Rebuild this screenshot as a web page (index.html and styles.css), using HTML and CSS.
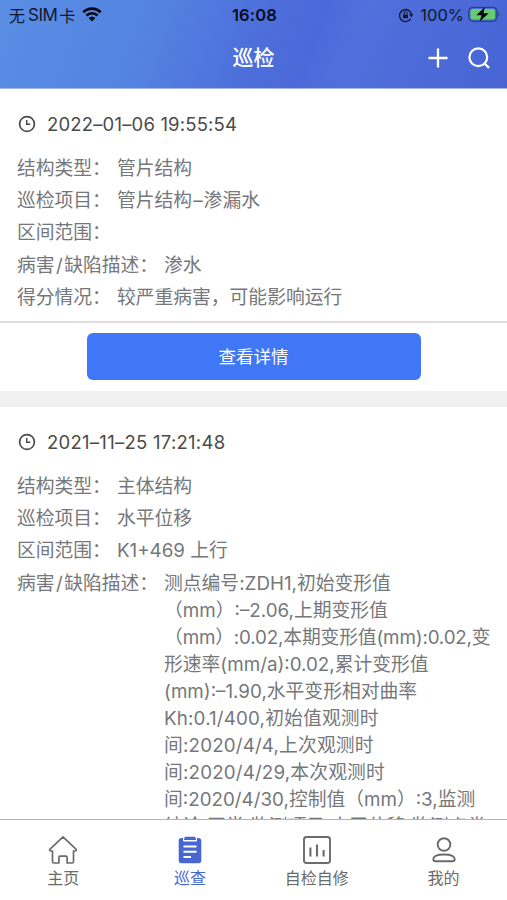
FILE: index.html
```html
<!DOCTYPE html>
<html lang="zh-CN">
<head>
<meta charset="utf-8">
<title>巡检</title>
<link rel="stylesheet" href="styles.css">
</head>
<body>
<div class="app">
  <header class="header">
    <div class="status">
      <div class="status-left"><span>无</span><span class="sim">SIM</span><span>卡</span>
        <svg class="wifi" viewBox="0 0 20 15" width="20" height="15"><path d="M1.3 5.2a12.6 12.6 0 0 1 17.4 0M4.4 8.5a8.1 8.1 0 0 1 11.2 0" fill="none" stroke="currentColor" stroke-width="2.7"/><path d="M6.6 11a5 5 0 0 1 6.8 0L10 14.4z" fill="currentColor"/></svg>
      </div>
      <div class="time">16:08</div>
      <div class="status-right">
        <svg viewBox="0 0 16 16" width="16" height="16"><path d="M12.6 11.8A6 6 0 1 1 13.5 8" fill="none" stroke="currentColor" stroke-width="1.4"/><path d="M11.2 7.2h4.2l-2.1 3zM5 7.4h5v3.8H5z" fill="currentColor"/><path d="M6 7.5V6a1.5 1.5 0 0 1 3 0v1.500" fill="none" stroke="currentColor"/></svg>
        <span class="percent">100%</span>
        <svg class="battery" viewBox="0 0 32 17" width="32" height="17"><rect x=".8" y="1.300" width="28" height="14" rx="4" fill="none" stroke="#28418b" stroke-width="1.2"/><rect x="2.600" y="3.100" width="24.400" height="10.400" rx="2.500" fill="#65cd6e"/><path d="M30.300 6v4.600c1.500-.7 1.500-3.900 0-4.600z" fill="#28418b"/><path d="M16.800 1 8.300 9.200h5.200L11.700 15.600 20.800 7.300h-5.300z" fill="#050914"/></svg>
      </div>
    </div>
    <div class="nav">
      <h1 class="title">巡检</h1>
      <div class="actions">
        <svg viewBox="0 0 22 22" width="22" height="22"><path d="M11 1.500v19M1.500 11h19" stroke="currentColor" stroke-width="2.300" fill="none"/></svg>
        <svg viewBox="0 0 24 24" width="24" height="24"><circle cx="11.300" cy="11.300" r="8.900" fill="none" stroke="currentColor" stroke-width="2.200"/><path d="m17.300 17.300 4.700 4.600" stroke="currentColor" stroke-width="2.300"/></svg>
      </div>
    </div>
  </header>

  <main class="list">
    <article class="card">
      <div class="stamp"><svg viewBox="0 0 18 18" width="18" height="18"><circle cx="9" cy="9" r="7.400" fill="none" stroke="currentColor" stroke-width="1.700"/><path d="M8.700 4.900v4.300h3.600" fill="none" stroke="currentColor" stroke-width="1.500"/></svg><span class="date">2022–01–06 19:55:54</span></div>
      <dl class="rows">
        <div class="row"><dt>结构类型：</dt><dd>管片结构</dd></div>
        <div class="row"><dt>巡检项目：</dt><dd>管片结构<span class="dash">–</span>渗漏水</dd></div>
        <div class="row"><dt>区间范围：</dt><dd></dd></div>
        <div class="row"><dt>病害<span class="slash">/</span>缺陷描述：</dt><dd>渗水</dd></div>
        <div class="row"><dt>得分情况：</dt><dd>较严重病害，可能影响运行</dd></div>
      </dl>
      <div class="card-foot"><button class="detail">查看详情</button></div>
    </article>

    <article class="card">
      <div class="stamp"><svg viewBox="0 0 18 18" width="18" height="18"><circle cx="9" cy="9" r="7.400" fill="none" stroke="currentColor" stroke-width="1.700"/><path d="M8.700 4.900v4.300h3.600" fill="none" stroke="currentColor" stroke-width="1.500"/></svg><span class="date wide">2021–11–25 17:21:48</span></div>
      <dl class="rows">
        <div class="row"><dt>结构类型：</dt><dd>主体结构</dd></div>
        <div class="row"><dt>巡检项目：</dt><dd>水平位移</dd></div>
        <div class="row"><dt>区间范围：</dt><dd>K1+469 上行</dd></div>
        <div class="row"><dt>病害<span class="slash">/</span>缺陷描述：</dt><dd>测点编号:ZDH1,初始变形值<br>（mm）:–2.06,上期变形值<br><span class="tight">（mm）:0.02,本期变形值(mm):0.02,变</span><br>形速率(mm/a):0.02,累计变形值<br>(mm):–1.90,水平变形相对曲率<br><span class="loose">Kh:0.1/400,初始值观测时<br>间:2020/4/4,上次观测时<br>间:2020/4/29,本次观测时<br></span>间:2020/4/30,控制值（mm）:3,监测<br>结论:正常,监测项目:水平位移,监测点类</dd></div>
      </dl>
    </article>
  </main>

  <nav class="tabs">
    <a class="tab"><svg viewBox="0 0 30 30" width="30" height="30"><path d="M15 1.800 1.800 14.400c-.6 1 .1 1.600 1 1.600h1.700v10.600c0 .9.500 1.400 1.300 1.400h5.100v-5.600c0-.8.400-1.200 1.100-1.200h6c.7 0 1.100.4 1.100 1.200V28h5.100c.8 0 1.300-.5 1.300-1.400V16h1.700c.9 0 1.600-.6 1-1.600z" fill="none" stroke="currentColor" stroke-width="1.700" stroke-linejoin="round"/></svg><span>主页</span></a>
    <a class="tab active"><svg viewBox="0 0 30 30" width="30" height="30"><path d="M6.500 3H8v2.300c0 .8.500 1.200 1.200 1.200h11.600c.7 0 1.200-.4 1.200-1.200V3h1.500c1.700 0 2.800 1 2.800 2.600v20c0 1.700-1 2.700-2.700 2.700H6.400c-1.700 0-2.700-1-2.700-2.700v-20C3.700 4 4.700 3 6.500 3z" fill="currentColor"/><path d="M9.800 1.800h10.400l.9 3.300H8.900z" fill="currentColor"/><path d="M8.500 11.500h13M8.500 16.800h13M8.500 22h7.500" stroke="#fff" stroke-width="1.900"/></svg><span>巡查</span></a>
    <a class="tab"><svg viewBox="0 0 30 30" width="30" height="30"><rect x="2" y="2" width="26" height="26" rx="2.500" fill="none" stroke="currentColor" stroke-width="1.900"/><path d="M8.400 12.500v9M15 9.500v12M21.600 15v6.500" stroke="currentColor" stroke-width="2.100"/></svg><span>自检自修</span></a>
    <a class="tab"><svg viewBox="0 0 30 30" width="30" height="30"><circle cx="15" cy="9.500" r="6.300" fill="none" stroke="currentColor" stroke-width="1.900"/><path d="M4.300 24.200c0-3.100 4.300-4.700 10.700-4.700s10.700 1.600 10.700 4.700c0 1.500-.9 2-2.300 2H6.600c-1.400 0-2.300-.5-2.300-2z" fill="none" stroke="currentColor" stroke-width="1.900"/></svg><span>我的</span></a>
  </nav>
</div>
</body>
</html>
```
FILE: styles.css
```css
* { box-sizing: border-box; }
body {
  margin: 0;
  font-family: Inter, "Noto Sans CJK SC", sans-serif;
  text-spacing-trim: space-all;
  color: #75777b;
}
svg { display: block; flex: none; }
.app {
  display: flex;
  flex-direction: column;
  width: 507px;
  height: 900px;
  overflow: hidden;
  background: #fff;
}
.header {
  flex: none;
  height: 89px;
  border-bottom: 1px solid #a6b6ea;
  background:
    linear-gradient(120deg, transparent 67%, rgba(76, 104, 216, .1) 67.5%, rgba(70, 98, 211, .4) 100%),
    linear-gradient(110deg, #598ee4 0%, #5484e2 28%, #4d6fdb 50%, #4c69d9 61%, #5072dd 69%, #4a66d5 100%);
}
.status {
  display: grid;
  grid-template-columns: 1fr auto 1fr;
  align-items: center;
  height: 29px;
  padding: 0 7px 0 9px;
  color: #10182d;
}
.status-left, .status-right { display: flex; align-items: center; }
.status-left { font-size: 16px; }
.sim { margin: 0 2px 0 3px; font-size: 17px; letter-spacing: -.5px; }
.wifi { margin-left: 7px; color: #050914; }
.time { font-size: 16.5px; font-weight: 600; letter-spacing: .2px; color: #070d20; }
.status-right { justify-content: flex-end; }
.percent { margin: 0 4px 0 6px; font-size: 16.5px; }
.nav {
  display: grid;
  grid-template-columns: 1fr auto 1fr;
  align-items: center;
  height: 57px;
  padding: 0 16px;
  color: #fff;
}
.title { grid-column: 2; margin: 0; font-size: 21px; line-height: 30px; font-weight: 500; }
.actions { display: flex; align-items: center; justify-content: flex-end; gap: 18px; }
.list { flex: 1; min-height: 0; overflow: hidden; background: #f0f0f0; }
.card { margin-bottom: 16px; background: #fff; }
.stamp {
  display: flex;
  align-items: center;
  gap: 11px;
  height: 65.6px;
  padding: 4px 18px 0;
  color: #4b4b4b;
}
.date { font-size: 18.5px; letter-spacing: .17px; }
.wide { letter-spacing: .27px; }
.rows {
  display: flex;
  flex-direction: column;
  gap: 5.35px;
  margin: 0;
  padding: 0 0 9.6px 17px;
  font-size: 18.8px;
  line-height: 27px;
}
.row { display: flex; gap: 6px; min-height: 27px; white-space: nowrap; }
.row dd { margin: 0; }
.slash { margin: 0 1.4px; }
.dash { margin: 0 1.1px; }
.tight { letter-spacing: -.16px; }
.loose { letter-spacing: .15px; }
.card-foot {
  height: 70.4px;
  padding-top: 10px;
  border-top: 2px solid #dedede;
}
.detail {
  display: block;
  width: 334px;
  height: 47px;
  margin: 0 auto;
  border: 0;
  border-radius: 6px;
  background: #4077f6;
  color: #fff;
  font: 17.5px/47px Inter, "Noto Sans CJK SC", sans-serif;
  padding: 0;
}
.tabs {
  flex: none;
  display: grid;
  grid-template-columns: repeat(4, 1fr);
  height: 81px;
  border-top: 1px solid #b5b5b5;
  background: #fff;
}
.tab {
  display: flex;
  flex-direction: column;
  align-items: center;
  padding: 15px 0 0;
  font-size: 16px;
  line-height: 26px;
  color: #6b6b6b;
}
.active { color: #4866d2; }
```
